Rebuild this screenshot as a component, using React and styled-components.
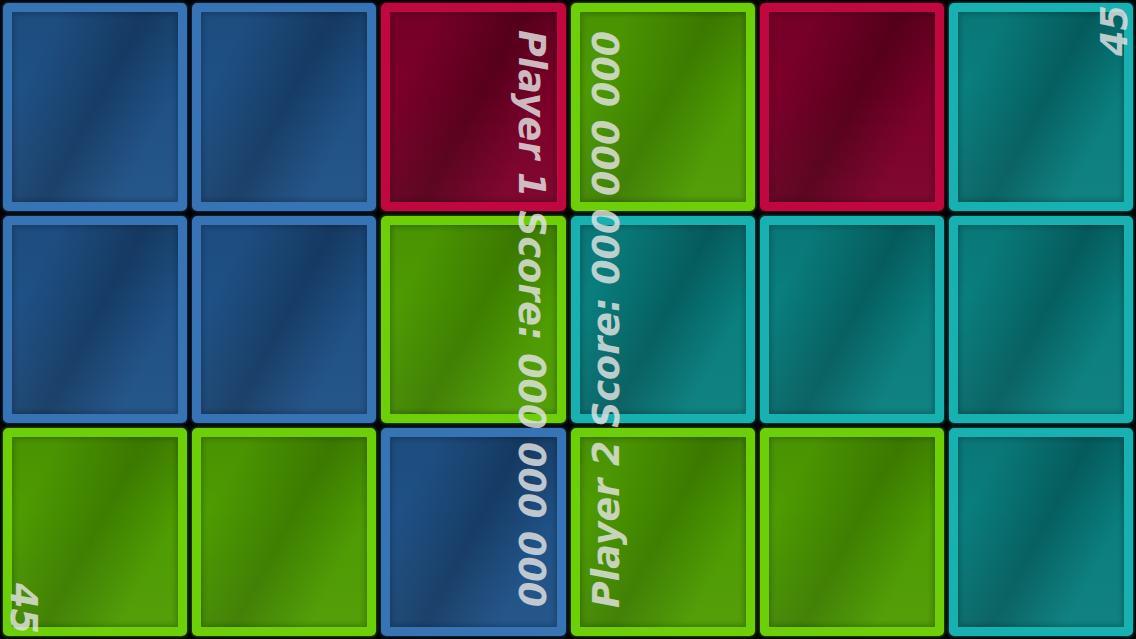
import React from 'react';
import styled, { createGlobalStyle, css } from 'styled-components';

const GlobalStyle = createGlobalStyle`
    html, body {
        margin: 0;
        padding: 0;
        background: #000;
        overflow: hidden;
    }
    #root {
        width: 1136px;
        height: 639px;
    }
`;

const palette = {
    blue: { edge: '#3674b6', light: '#1f5186', dark: '#163c66' },
    red: { edge: '#c1073f', light: '#7c002a', dark: '#58001c' },
    green: { edge: '#6ccf08', light: '#4e9b02', dark: '#3d7e00' },
    cyan: { edge: '#17b1b1', light: '#0a7e7e', dark: '#055f60' },
};

const board = [
    ['blue', 'blue', 'red', 'green', 'red', 'cyan'],
    ['blue', 'blue', 'green', 'cyan', 'cyan', 'cyan'],
    ['green', 'green', 'blue', 'green', 'green', 'cyan'],
];

function App() {
    return (
        <>
            <GlobalStyle />
            <Screen>
                <Grid>
                    {board.flat().map((color, i) => (
                        <Tile key={i} $color={color}>
                            <Sheen />
                        </Tile>
                    ))}
                </Grid>
                <PlayerOneScore>Player 1 Score: 000 000 000</PlayerOneScore>
                <PlayerTwoScore>Player 2 Score: 000 000 000</PlayerTwoScore>
                <TopTimer>45</TopTimer>
                <BottomTimer>45</BottomTimer>
            </Screen>
        </>
    );
}

const Screen = styled.div`
    position: relative;
    width: 1136px;
    height: 639px;
    background: #000;
    overflow: hidden;
`;

const Grid = styled.div`
    display: grid;
    grid-template-columns: repeat(6, 1fr);
    grid-template-rows: repeat(3, 1fr);
    gap: 5px;
    padding: 3px;
    height: 100%;
    box-sizing: border-box;
`;

const Tile = styled.div`
    display: flex;
    border-radius: 5px;
    ${({ $color }) => {
        const c = palette[$color];
        return css`
            border: 9px solid ${c.edge};
            background: linear-gradient(
                118deg,
                ${c.light} 0%,
                ${c.light} 18%,
                ${c.dark} 50%,
                ${c.light} 78%,
                ${c.light} 100%
            );
            box-shadow: 0 0 3px 1px ${c.edge}66;
        `;
    }}
`;

const Sheen = styled.div`
    flex: 1;
    border-radius: 2px;
    background: linear-gradient(180deg, rgba(0, 0, 0, 0.06), rgba(0, 0, 0, 0) 40%, rgba(255, 255, 255, 0.03));
    box-shadow: inset 0 0 5px 2px rgba(0, 0, 0, 0.22);
`;

const Label = styled.div`
    position: absolute;
    white-space: nowrap;
    font-family: 'DejaVu Sans', 'Liberation Sans', sans-serif;
    font-weight: bold;
    font-style: italic;
    font-size: 36.5px;
    line-height: 1;
    color: rgba(228, 228, 228, 0.82);
    transform-origin: 0 0;
`;

const FacingLeft = styled(Label)`
    transform: rotate(90deg);
`;

const FacingRight = styled(Label)`
    transform: rotate(-90deg);
`;

const PlayerOneScore = styled(FacingLeft)`
    left: 549px;
    top: 30px;
`;

const PlayerTwoScore = styled(FacingRight)`
    left: 589px;
    top: 608px;
`;

const TopTimer = styled(FacingRight)`
    left: 1097px;
    top: 56px;
`;

const BottomTimer = styled(FacingLeft)`
    left: 41px;
    top: 583px;
`;

export default App;
